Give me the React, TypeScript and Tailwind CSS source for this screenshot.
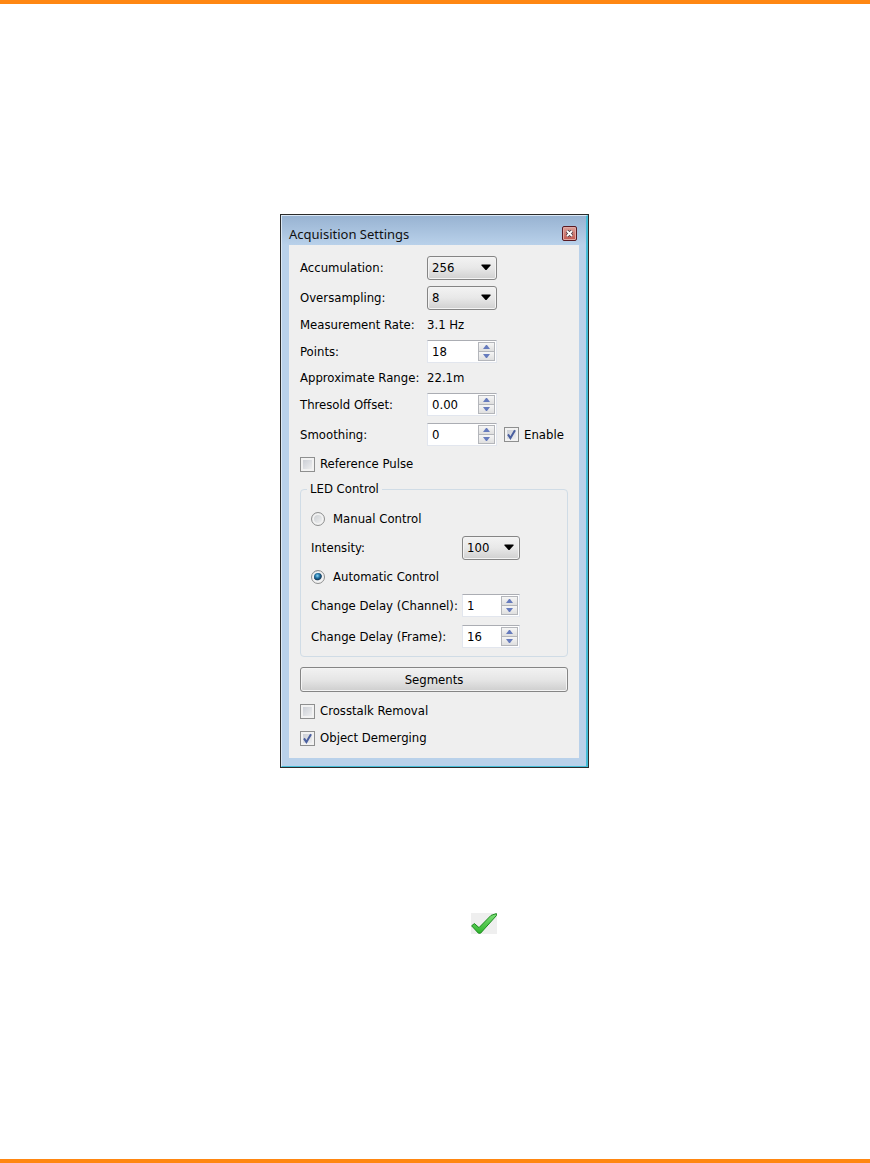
import { useState } from 'react';
import type { ReactNode } from 'react';

interface DropdownProps {
  id: string;
  value: string;
  options: string[];
  className: string;
}

function Dropdown({ id, value, options, className }: DropdownProps) {
  return (
    <div className={`relative h-6 ${className}`}>
      <select
        id={id}
        defaultValue={value}
        className="h-full w-full appearance-none rounded-[3px] border border-[#858585] bg-linear-to-b from-[#f3f3f3] via-[#e8e8e8] to-[#d0d0d0] pl-1 shadow-[inset_0_0_0_1px_#f4f4f4]"
      >
        {options.map((option) => (
          <option key={option}>{option}</option>
        ))}
      </select>
      <svg viewBox="0 0 10 6" className="pointer-events-none absolute top-2 right-1.5 h-1.5 w-2.5">
        <path d="M0.5 0.5H9.5V1.5L5.5 6H4.5L0.5 1.5Z" fill="#000" />
      </svg>
    </div>
  );
}

interface SpinBoxProps {
  id: string;
  initial: number;
  step?: number;
  digits?: number;
  className: string;
}

function SpinBox({ id, initial, step = 1, digits = 0, className }: SpinBoxProps) {
  const [value, setValue] = useState(initial.toFixed(digits));
  const change = (delta: number) => setValue((Number(value) + delta).toFixed(digits));
  const button =
    'flex flex-1 items-center justify-center border border-[#b4b6bb] bg-linear-to-b from-[#f6f6f6] to-[#dfdfdf]';

  return (
    <div className={`flex h-[23px] border border-[#e2e6ee] border-t-[#abadb3] bg-white ${className}`}>
      <input
        id={id}
        value={value}
        onChange={(e) => setValue(e.target.value)}
        className="w-0 min-w-0 flex-1 bg-transparent pt-px pl-1 outline-none"
      />
      <div className="flex w-[17px] flex-col py-px">
        <button type="button" aria-label="Increase" className={button} onClick={() => change(step)}>
          <svg viewBox="0 0 7 4" className="h-1 w-[7px]">
            <path d="M0 4H7L4 0H3Z" fill="#667bbd" />
          </svg>
        </button>
        <button type="button" aria-label="Decrease" className={`${button} border-t-0`} onClick={() => change(-step)}>
          <svg viewBox="0 0 7 4" className="h-1 w-[7px]">
            <path d="M0 0H7L4 4H3Z" fill="#667bbd" />
          </svg>
        </button>
      </div>
      <div className="w-px bg-white" />
    </div>
  );
}

function CheckBox({ label, checked = false }: { label: string; checked?: boolean }) {
  return (
    <label className="flex items-center gap-[5px]">
      <span className="relative size-[15px]">
        <input
          type="checkbox"
          defaultChecked={checked}
          className="peer block size-full appearance-none border border-[#8e8f8f] bg-linear-to-br from-[#c4c8d0] to-[#f5f5f5] shadow-[inset_0_0_0_2px_#f2f2f2]"
        />
        <svg viewBox="0 0 15 15" className="pointer-events-none absolute inset-0 hidden size-full peer-checked:block">
          <path d="M4 7.4L6.4 11L11 3.2" fill="none" stroke="#4a5f9f" strokeWidth="2" />
        </svg>
      </span>
      {label}
    </label>
  );
}

function RadioButton({ label, checked = false }: { label: string; checked?: boolean }) {
  return (
    <label className="flex h-[18px] items-center gap-2">
      <input
        type="radio"
        name="led-control"
        defaultChecked={checked}
        className="size-[14px] appearance-none rounded-full border border-[#8e8f8f] bg-linear-to-br from-[#c4c8cc] to-[#f8f8f8] shadow-[inset_0_0_0_2px_#f2f2f2] checked:bg-[radial-gradient(circle_at_45%_40%,#8fd4f2_0px,#2a7fb0_2px,#123a5c_4px,#f2f2f2_5px)]"
      />
      {label}
    </label>
  );
}

interface RowProps {
  label: string;
  htmlFor?: string;
  className?: string;
  children: ReactNode;
}

function Row({ label, htmlFor, className = '', children }: RowProps) {
  return (
    <div className={`grid grid-cols-[127px_1fr] items-center ${className}`}>
      {htmlFor ? <label htmlFor={htmlFor}>{label}</label> : <span>{label}</span>}
      {children}
    </div>
  );
}

function LedControl() {
  return (
    <fieldset className="mt-[5px] rounded-[4px] border border-[#d0dce6] px-2.5 pb-2">
      <legend className="-ml-1 px-[3px] leading-[18px]">LED Control</legend>
      <div className="pt-3">
        <RadioButton label="Manual Control" />
      </div>
      <div className="mt-2 grid grid-cols-[151px_1fr] items-center">
        <label htmlFor="intensity">Intensity:</label>
        <Dropdown id="intensity" value="100" options={['25', '50', '75', '100']} className="w-[58px]" />
      </div>
      <div className="mt-2">
        <RadioButton label="Automatic Control" checked />
      </div>
      <div className="mt-2 grid grid-cols-[151px_1fr] items-center gap-y-2">
        <label htmlFor="delay-channel">Change Delay (Channel):</label>
        <SpinBox id="delay-channel" initial={1} className="w-[58px]" />
        <label htmlFor="delay-frame">Change Delay (Frame):</label>
        <SpinBox id="delay-frame" initial={16} className="w-[58px]" />
      </div>
    </fieldset>
  );
}

function AcquisitionSettings() {
  return (
    <section className="w-[309px] border border-[#2b2b2b]">
      <div className="border-t border-r-2 border-b border-l border-t-[#dbe8f5] border-r-[#45bcd6] border-b-[#45bcd6] border-l-[#dbe8f5] bg-[#b9d1ea] pb-2">
        <header className="flex h-[29px] items-center justify-between bg-linear-to-b from-[#98b3d2] to-[#b9d1ea] pt-1.5 pr-[9px] pl-[7px]">
          <h1 className="font-['Noto_Sans',sans-serif] text-[13px] leading-[18px] text-[#111]">Acquisition Settings</h1>
          <button
            type="button"
            aria-label="Close"
            className="flex size-[15px] items-center justify-center rounded-[2px] border border-[#5a1a22] bg-linear-to-b from-[#dca29c] to-[#c1564f] shadow-[inset_0_0_0_1px_#e0aaa6]"
          >
            <svg viewBox="0 0 9 9" className="size-[9px]">
              <path d="M2 2L7 7M7 2L2 7" stroke="#4b3a44" strokeWidth="3.4" />
              <path d="M2 2L7 7M7 2L2 7" stroke="#fff" strokeWidth="1.8" />
            </svg>
          </button>
        </header>

        <form className="mr-[7px] ml-[7px] flex flex-col bg-[#efefef] px-[11px] py-[11px]" onSubmit={(e) => e.preventDefault()}>
          <div className="flex flex-col gap-1.5">
            <Row label="Accumulation:" htmlFor="accumulation">
              <Dropdown id="accumulation" value="256" options={['64', '128', '256', '512']} className="w-[70px]" />
            </Row>
            <Row label="Oversampling:" htmlFor="oversampling">
              <Dropdown id="oversampling" value="8" options={['1', '2', '4', '8']} className="w-[70px]" />
            </Row>
            <Row label="Measurement Rate:">
              <output>3.1 Hz</output>
            </Row>
            <Row label="Points:" htmlFor="points">
              <SpinBox id="points" initial={18} className="w-[70px]" />
            </Row>
            <Row label="Approximate Range:">
              <output>22.1m</output>
            </Row>
            <Row label="Thresold Offset:" htmlFor="threshold">
              <SpinBox id="threshold" initial={0} step={0.01} digits={2} className="w-[70px]" />
            </Row>
            <Row label="Smoothing:" htmlFor="smoothing" className="h-[25px]">
              <div className="flex items-center gap-[7px]">
                <SpinBox id="smoothing" initial={0} className="w-[70px]" />
                <CheckBox label="Enable" checked />
              </div>
            </Row>
            <div className="flex h-[22px] items-center">
              <CheckBox label="Reference Pulse" />
            </div>
          </div>

          <LedControl />

          <button
            type="button"
            className="mt-2.5 mb-2.5 h-[25px] rounded-[3px] border border-[#858585] bg-linear-to-b from-[#f2f2f2] via-[#e6e6e6] to-[#cecece] shadow-[inset_0_0_0_1px_#f4f4f4]"
          >
            Segments
          </button>
          <div className="flex flex-col gap-[9px]">
            <CheckBox label="Crosstalk Removal" />
            <CheckBox label="Object Demerging" checked />
          </div>
        </form>
      </div>
    </section>
  );
}

function ApplyIcon() {
  return (
    <svg viewBox="0 0 26 21" className="h-[21px] w-[26px] bg-[#efefef]">
      <defs>
        <linearGradient id="apply" x1="0" y1="0" x2="0" y2="1">
          <stop offset="0" stopColor="#7fe07a" />
          <stop offset="1" stopColor="#2fb52c" />
        </linearGradient>
      </defs>
      <path
        d="M0.6 12.8L3.4 10.6L8 14.6L20 2.4L25.4 0.6V2.6L9.6 20.2H7.4Z"
        fill="url(#apply)"
        stroke="#1c8a1f"
        strokeWidth="1"
      />
    </svg>
  );
}

export default function App() {
  return (
    <main className="flex min-h-screen flex-col border-y-4 border-[#ff8712] bg-white pt-[210px] font-['DejaVu_Sans_Condensed','DejaVu_Sans',sans-serif] text-[13px] leading-[18px] text-black">
      <div className="flex justify-center pr-px">
        <AcquisitionSettings />
      </div>
      <div className="mt-[145px] flex justify-center pl-[98px]">
        <ApplyIcon />
      </div>
    </main>
  );
}
